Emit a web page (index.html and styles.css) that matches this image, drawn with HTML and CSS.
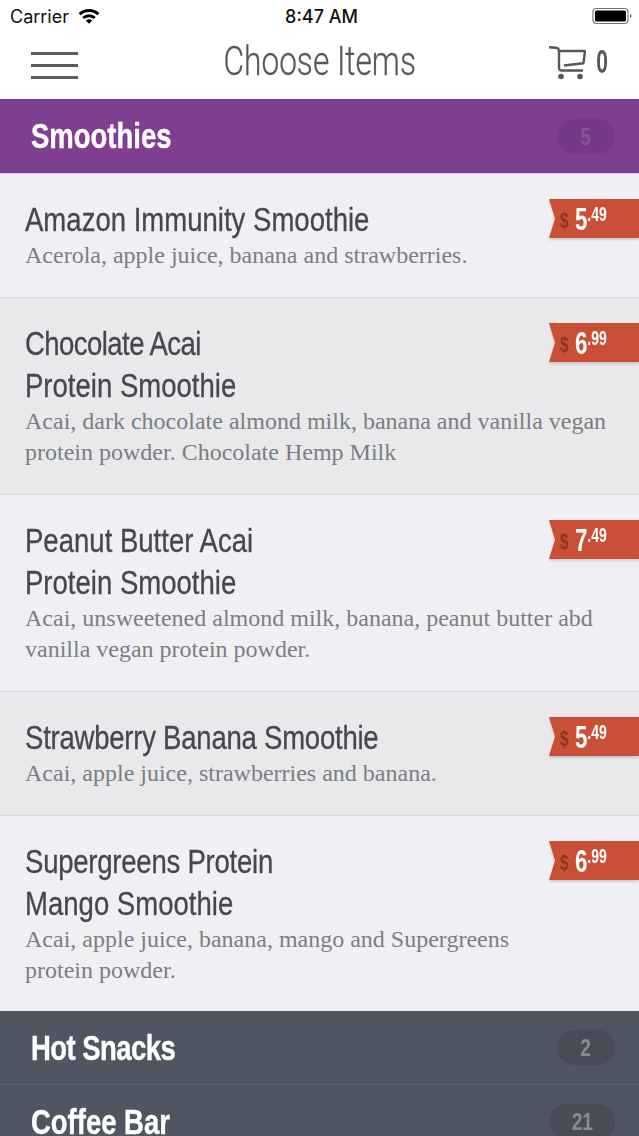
FILE: index.html
```html
<!DOCTYPE html>
<html lang="en">
<head>
    <meta charset="UTF-8">
    <meta name="viewport" content="width=device-width, initial-scale=1.0">
    <title>Choose Items</title>
    <link rel="stylesheet" href="styles.css">
</head>
<body>
    <!-- Status bar -->
    <div class="status-bar">
        <div class="status-left">
            <span>Carrier</span>
            <svg class="wifi" width="22" height="16" viewBox="0 0 22 16">
                <path d="M0.6 5.2A15 15 0 0 1 21.4 5.2L19.4 7.3A12.2 12.2 0 0 0 2.6 7.3Z" fill="#000"/>
                <path d="M4.2 8.9A10 10 0 0 1 17.8 8.9L15.8 11A7.2 7.2 0 0 0 6.2 11Z" fill="#000"/>
                <path d="M7.8 12.6A5 5 0 0 1 14.2 12.6L11 15.8Z" fill="#000"/>
            </svg>
        </div>
        <div class="status-time">8:47 AM</div>
        <svg class="battery" width="41" height="18" viewBox="0 0 41 18">
            <rect x="1" y="1.500" width="35" height="15" rx="3.500" fill="#fff" stroke="#777" stroke-width="1.200"/>
            <rect x="3" y="3.500" width="31" height="11" rx="1.500" fill="#000"/>
            <path d="M38 7v4c1-.3 1.600-1 1.600-2S39 7.300 38 7z" fill="#777"/>
        </svg>
    </div>

    <!-- Nav -->
    <header class="nav">
        <div class="menu-btn"><span></span><span></span><span></span></div>
        <h1>Choose Items</h1>
        <div class="cart">
            <svg width="37" height="35" viewBox="0 0 37 35" fill="none" stroke="#54585c" stroke-width="2.400">
                <path d="M0 2.200L7 2.800C9 3 10 4 10 6V23C10 24.500 11 25.500 12.500 25.500H34"/>
                <path d="M10 6H36L34.500 18.200L15 20.500" stroke-linejoin="round"/>
                <circle cx="12" cy="31.500" r="2.800" fill="#54585c" stroke="none"/>
                <circle cx="31" cy="31.500" r="2.800" fill="#54585c" stroke="none"/>
            </svg>
            <span class="cart-count">0</span>
        </div>
    </header>

    <section class="category category-open">
        <h2>Smoothies</h2>
        <span class="count"><span>5</span></span>
    </section>

    <ul class="items">
        <li class="item">
            <h3>Amazon Immunity Smoothie</h3>
            <p>Acerola, apple juice, banana and strawberries.</p>
            <div class="price"><div class="ribbon"><div class="amount"><span class="dollar">$</span><span class="whole">5</span><span class="cents">.49</span></div></div></div>
        </li>
        <li class="item alt">
            <h3><span class="tight-lg">Chocolate Acai</span><br>Protein Smoothie</h3>
            <p>Acai, dark chocolate almond milk, banana and vanilla vegan protein powder. Chocolate Hemp Milk</p>
            <div class="price"><div class="ribbon"><div class="amount"><span class="dollar">$</span><span class="whole">6</span><span class="cents">.99</span></div></div></div>
        </li>
        <li class="item">
            <h3>Peanut Butter Acai<br>Protein Smoothie</h3>
            <p>Acai, unsweetened almond milk, banana, peanut butter abd vanilla vegan protein powder.</p>
            <div class="price"><div class="ribbon"><div class="amount"><span class="dollar">$</span><span class="whole">7</span><span class="cents">.49</span></div></div></div>
        </li>
        <li class="item alt">
            <h3 class="tight-sm">Strawberry Banana Smoothie</h3>
            <p>Acai, apple juice, strawberries and banana.</p>
            <div class="price"><div class="ribbon"><div class="amount"><span class="dollar">$</span><span class="whole">5</span><span class="cents">.49</span></div></div></div>
        </li>
        <li class="item">
            <h3><span class="tight-sm">Supergreens Protein</span><br>Mango Smoothie</h3>
            <p>Acai, apple juice, banana, mango and Supergreens<br>protein powder.</p>
            <div class="price"><div class="ribbon"><div class="amount"><span class="dollar">$</span><span class="whole">6</span><span class="cents">.99</span></div></div></div>
        </li>
    </ul>

    <section class="category">
        <h2 class="tight-lg">Hot Snacks</h2>
        <span class="count"><span>2</span></span>
    </section>
    <section class="category">
        <h2>Coffee Bar</h2>
        <span class="count"><span>21</span></span>
    </section>
</body>
</html>
```

FILE: styles.css
```css
* {
    box-sizing: border-box;
    margin: 0;
    padding: 0;
}

html, body {
    height: 1136px;
    overflow: hidden;
}

body {
    background-color: #f0f0f4;
    font-family: "Liberation Sans", Arial, sans-serif;
}

/* Status bar */
.status-bar {
    height: 40px;
    background-color: #ffffff;
    display: grid;
    grid-template-columns: 1fr auto 1fr;
    align-items: center;
    padding: 0 6px 8px 10px;
    font-family: Inter, sans-serif;
    font-size: 18px;
    color: #111;
}

.status-left {
    display: flex;
    align-items: center;
    gap: 9px;
}

.status-time {
    font-size: 18px;
    font-weight: 500;
}

.battery {
    justify-self: end;
}

/* Nav */
.nav {
    height: 59px;
    background-color: #ffffff;
    display: grid;
    grid-template-columns: 1fr auto 1fr;
    align-items: center;
    padding: 0 31px 9px 31px;
    color: #54585c;
}

.menu-btn {
    width: 47px;
    display: flex;
    flex-direction: column;
    gap: 9px;
}

.menu-btn span {
    height: 3px;
    background-color: #5a5c5e;
}

.nav h1 {
    font-family: Roboto, sans-serif;
    font-size: 40px;
    font-weight: 300;
    line-height: 44px;
    margin-bottom: 6px;
    transform: scaleX(0.79);
    -webkit-text-stroke: 0.3px #54585c;
}

.cart {
    justify-self: end;
    display: flex;
    align-items: center;
    gap: 0;
    margin-right: 0;
    margin-bottom: 5px;
}

.cart-count {
    font-size: 34px;
    font-weight: 700;
    line-height: 34px;
    width: 22px;
    text-align: right;
    transform: scaleX(0.62);
    transform-origin: right;
    margin-bottom: 3px;
}

/* Categories */
.category {
    height: 74px;
    background-color: #4f5661;
    border-bottom: 1px solid #5b626c;
    display: flex;
    align-items: center;
    justify-content: space-between;
    padding: 0 24px 0 31px;
    color: #ffffff;
}

.category-open {
    height: 75px;
    background-color: #7f3f8f;
    border-bottom: 1px solid #d9c8e6;
}

.category h2 {
    font-size: 35px;
    font-weight: 700;
    -webkit-text-stroke: 0.4px #ffffff;
    transform: scaleX(0.785);
    transform-origin: left;
}

.count {
    min-width: 58px;
    height: 35px;
    padding: 0 19px;
    border-radius: 18px;
    background-color: #474c57;
    color: #868b96;
    font-size: 24px;
    font-weight: 700;
    line-height: 35px;
    text-align: center;
}

.count span {
    display: inline-block;
    transform: scaleX(0.8);
}

.category-open .count {
    background-color: #743a88;
    color: #8a5299;
}

/* Items */
.items {
    list-style: none;
}

.item {
    position: relative;
    padding: 24px 25px 0;
    height: 197px;
    border-bottom: 1px solid #d8d9dc;
    background-color: #f0f0f4;
}

.item.alt {
    background-color: #e9e9ec;
}

.item:nth-child(1),
.item:nth-child(4) {
    height: 124px;
}

.item:nth-child(5) {
    border-bottom: none;
    height: 195px;
}

.item h3 {
    font-size: 34px;
    font-weight: 400;
    line-height: 42px;
    color: #44484c;
    -webkit-text-stroke: 0.3px #44484c;
    transform: scaleX(0.81);
    transform-origin: left;
    white-space: nowrap;
}

.item p {
    font-family: "Liberation Serif", serif;
    font-size: 24px;
    line-height: 31px;
    color: #7b7e82;
}

.tight-sm {
    letter-spacing: -0.3px;
}

.tight-lg {
    letter-spacing: -0.7px;
}

/* Price ribbon */
.price {
    position: absolute;
    top: 25px;
    right: 0;
    width: 90px;
    filter: drop-shadow(0 2px 1px rgba(0, 0, 0, 0.14));
}

.ribbon {
    height: 39px;
    padding-left: 11px;
    background-color: #c94f36;
    clip-path: polygon(0 0, 100% 0, 100% 100%, 0 100%, 6px 50%);
}

.amount {
    display: flex;
    transform: scaleX(0.7);
    transform-origin: left;
    color: #ffffff;
    font-weight: 700;
    white-space: nowrap;
}

.dollar {
    font-size: 22px;
    line-height: 44px;
    color: #8f3423;
    margin-right: 9px;
}

.whole {
    font-size: 32px;
    line-height: 40px;
}

.cents {
    font-size: 20px;
    line-height: 30px;
}
```
